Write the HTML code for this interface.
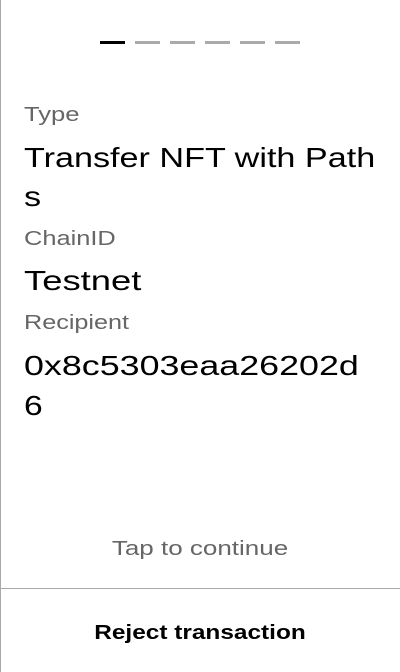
<!DOCTYPE html>
<html><head><style>
body{margin:0;width:400px;height:672px;background:#fff;font-family:"Liberation Sans",sans-serif;position:relative;overflow:hidden}
.lb{position:absolute;left:0;top:0;width:1px;height:672px;background:#aaa}
.d{position:absolute;top:41px;width:25px;height:3px;background:#aaa}
.t{position:absolute;left:24px;white-space:nowrap;transform-origin:0 0}
.l{font-size:20px;color:#666}
.v{font-size:28px;color:#000}
.c{position:absolute;left:0;width:400px;text-align:center;white-space:nowrap;transform-origin:200px 0}
</style></head><body>
<div class="lb"></div>
<div class="d" style="left:100px;background:#000"></div>
<div class="d" style="left:135px"></div>
<div class="d" style="left:170px"></div>
<div class="d" style="left:205px"></div>
<div class="d" style="left:240px"></div>
<div class="d" style="left:275px"></div>
<div class="t l" style="top:104px;transform:scaleX(1.28)">Type</div>
<div class="t v" style="top:142px;transform:scaleX(1.22)">Transfer NFT with Path</div>
<div class="t v" style="top:181px;transform:scaleX(1.22)">s</div>
<div class="t l" style="top:228px;transform:scaleX(1.27)">ChainID</div>
<div class="t v" style="top:265px;transform:scaleX(1.3)">Testnet</div>
<div class="t l" style="top:312px;transform:scaleX(1.26)">Recipient</div>
<div class="t v" style="top:350px;transform:scaleX(1.28)">0x8c5303eaa26202d</div>
<div class="t v" style="top:390px;transform:scaleX(1.2)">6</div>
<div class="c" style="top:538px;font-size:20px;color:#666;transform:scaleX(1.3)">Tap to continue</div>
<div style="position:absolute;left:0;top:588px;width:400px;height:1px;background:#aaa"></div>
<div class="c" style="top:622px;font-size:20px;font-weight:bold;color:#000;transform:scaleX(1.22)">Reject transaction</div>
</body></html>
